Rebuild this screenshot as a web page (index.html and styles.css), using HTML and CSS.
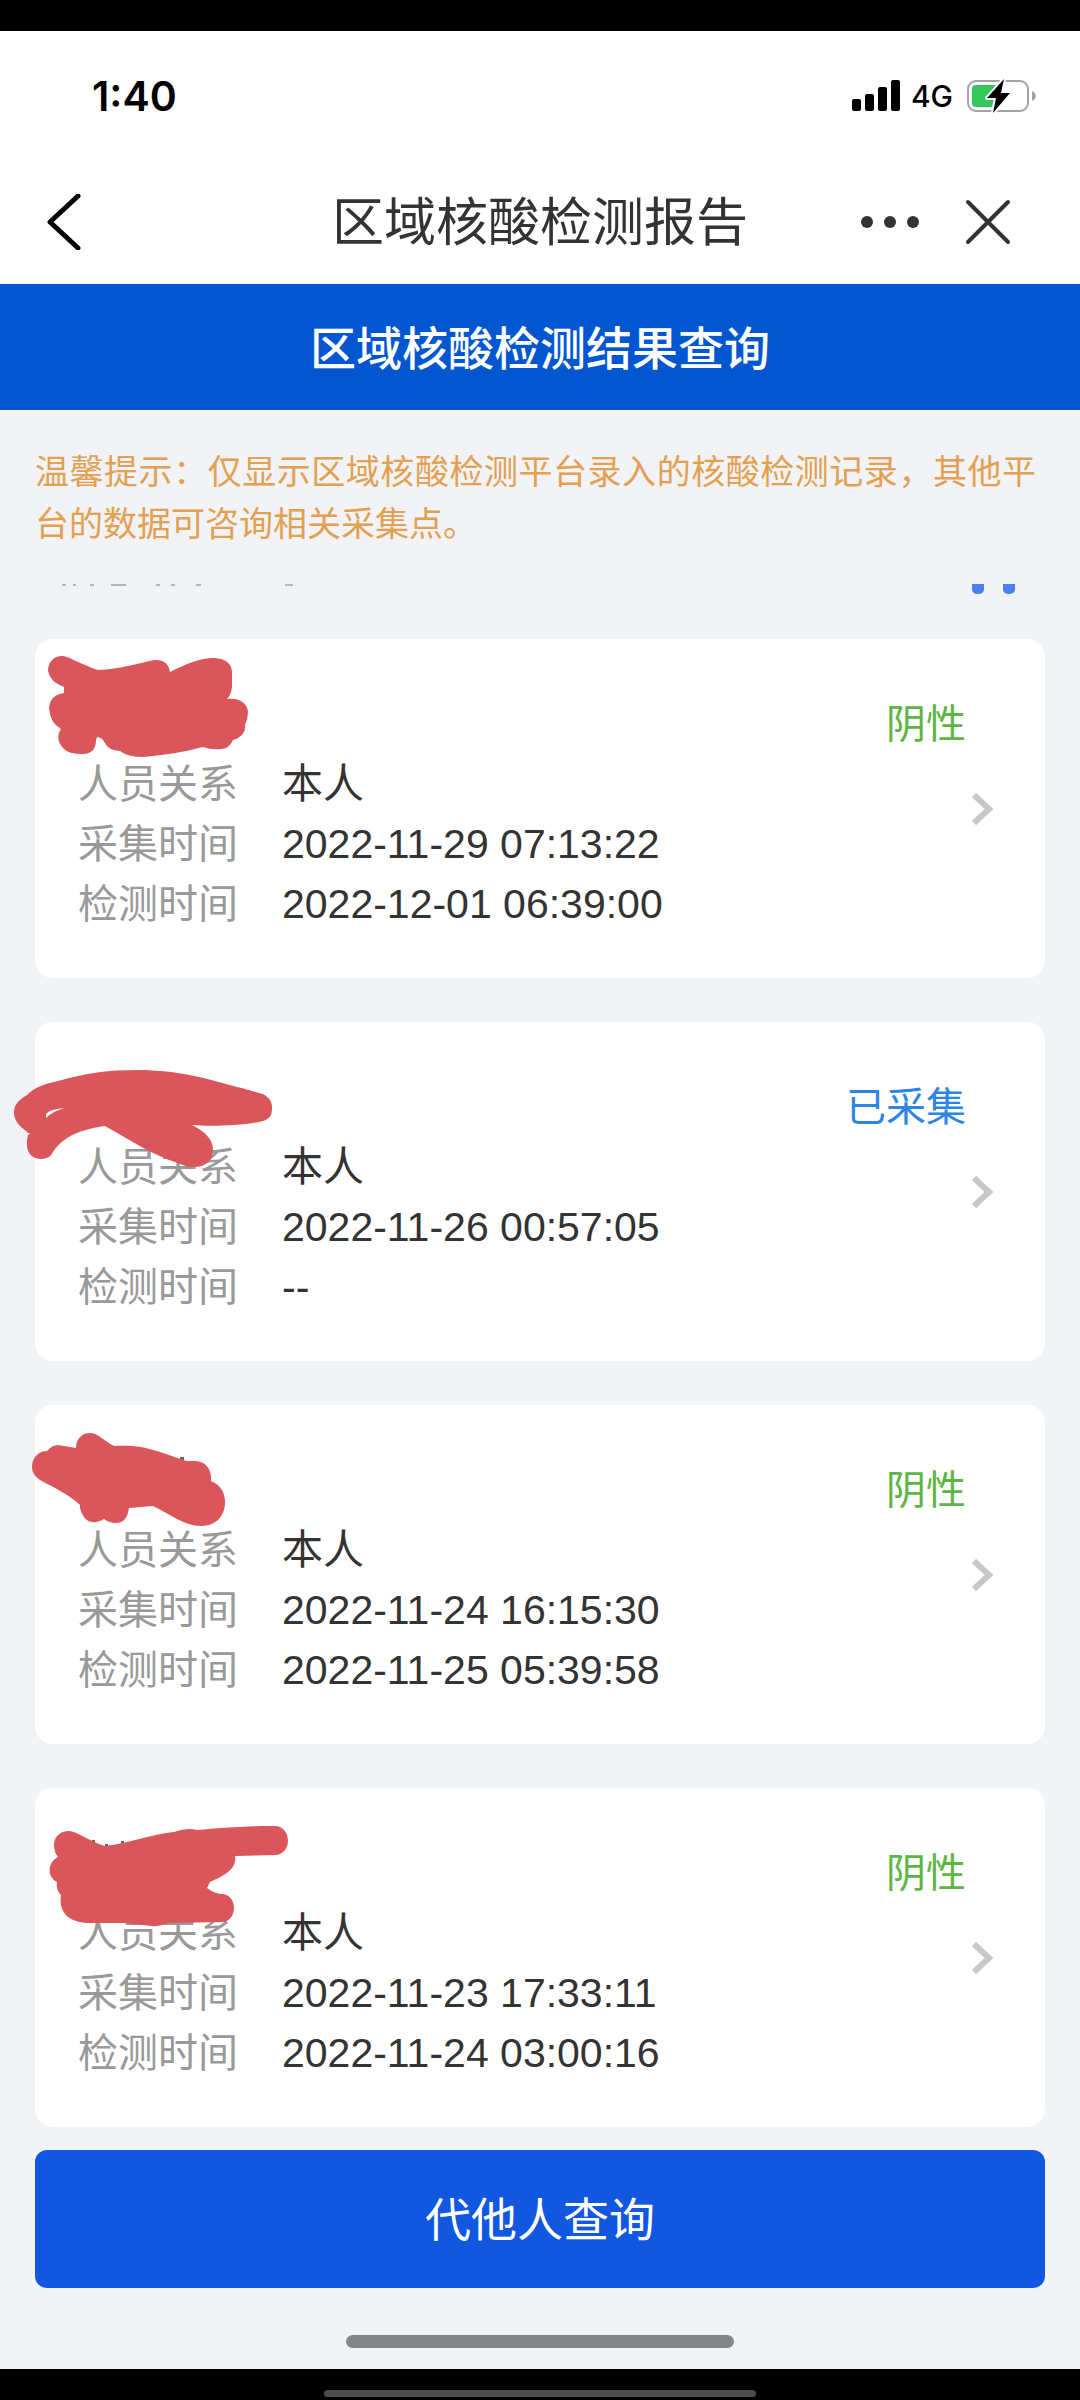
FILE: index.html
```html
<!DOCTYPE html>
<html lang="zh-CN">
<head>
  <meta charset="UTF-8">
  <meta name="viewport" content="width=device-width, initial-scale=1.0">
  <title>区域核酸检测报告</title>
  <link rel="stylesheet" href="styles.css">
</head>
<body>
  <div class="screen">
    <div class="status-bar">
      <span class="clock">1:40</span>
      <div class="status-icons">
        <svg class="signal" width="49" height="32" viewBox="0 0 49 32" aria-hidden="true">
          <rect x="0" y="19" width="9" height="12" rx="2"/>
          <rect x="13" y="14" width="9" height="17" rx="2"/>
          <rect x="26" y="7" width="9" height="24" rx="2"/>
          <rect x="39" y="0" width="9" height="31" rx="2"/>
        </svg>
        <span class="network">4G</span>
        <svg class="battery" width="70" height="34" viewBox="0 0 70 34" aria-hidden="true">
          <rect x="1" y="2" width="60" height="30" rx="8" fill="none" stroke="#a3a3a5" stroke-width="2"/>
          <path d="M65 12c5 2 5 8 0 10z" fill="#a3a3a5"/>
          <rect x="5" y="6" width="27" height="22" rx="4" fill="#34c759"/>
          <path d="M37 0 20 19h9l-3 15L43 14h-9z" fill="#000" stroke="#fff" stroke-width="4" paint-order="stroke" stroke-linejoin="round"/>
        </svg>
      </div>
    </div>

    <header class="nav-bar">
      <button class="nav-btn" aria-label="返回">
        <svg width="34" height="56" viewBox="0 0 34 56"><path d="M31 2 3 28l28 26" fill="none" stroke="#000" stroke-width="5" stroke-linecap="round" stroke-linejoin="round"/></svg>
      </button>
      <h1 class="nav-title">区域核酸检测报告</h1>
      <div class="nav-actions">
        <button class="nav-btn" aria-label="更多">
          <svg width="60" height="14" viewBox="0 0 60 14" fill="#333"><circle cx="7" cy="7" r="6"/><circle cx="30" cy="7" r="6"/><circle cx="53" cy="7" r="6"/></svg>
        </button>
        <button class="nav-btn" aria-label="关闭">
          <svg width="46" height="46" viewBox="0 0 46 46"><path d="M3 3l40 40M43 3 3 43" fill="none" stroke="#333" stroke-width="4" stroke-linecap="round"/></svg>
        </button>
      </div>
    </header>

    <h2 class="banner">区域核酸检测结果查询</h2>

    <p class="tip">温馨提示：仅显示区域核酸检测平台录入的核酸检测记录，其他平台的数据可咨询相关采集点。</p>

    <main class="list">
      <!-- 上一条记录滚动后露出的底边 -->
      <svg class="list-edge" height="10" viewBox="0 0 1080 10" preserveAspectRatio="none" aria-hidden="true">
        <path d="M62 1h4M73 1h3M90 1h4M111 1h15M156 1h4M171 1h4M196 1h5M285 1h8" stroke="#b4b6ba" stroke-width="2"/>
        <path d="M972 0h12v6q-1 4-6 4t-6-4zM1003 0h12v6q-1 4-6 4t-6-4z" fill="#4d7ff0"/>
      </svg>

      <a class="card" href="#">
        <div class="card-body">
          <span class="result negative">阴性</span>
          <dl class="fields">
            <dt>人员关系</dt><dd>本人</dd>
            <dt>采集时间</dt><dd>2022-11-29 07:13:22</dd>
            <dt>检测时间</dt><dd>2022-12-01 06:39:00</dd>
          </dl>
        </div>
        <svg class="arrow" width="24" height="34" viewBox="0 0 24 34"><path d="M3 3l15 14L3 31"/></svg>
        <svg class="mark" width="300" height="150" viewBox="0 0 300 150" aria-hidden="true">
          <path d="M48 32C48 23 54 17 62 17 68 17 78 24 98 31 120 30 140 24 154 21Q168 20 170 33C186 25 200 19 214 19Q232 20 232 34V48Q231 56 227 60C242 58 248 67 248 73Q248 80 245 86 246 97 233 101 229 110 221 110 211 111 203 108 178 115 143 118 128 118 120 112 108 111 105 104 102 98 97 98L96 101Q96 115 82 115 70 115 65 111 54 101 61 90 50 84 49 69 50 56 64 54V48Q50 43 48 32Z"/>
        </svg>
      </a>

      <a class="card" href="#">
        <div class="card-body">
          <span class="result sampled">已采集</span>
          <dl class="fields">
            <dt>人员关系</dt><dd>本人</dd>
            <dt>采集时间</dt><dd>2022-11-26 00:57:05</dd>
            <dt>检测时间</dt><dd>--</dd>
          </dl>
        </div>
        <svg class="arrow" width="24" height="34" viewBox="0 0 24 34"><path d="M3 3l15 14L3 31"/></svg>
        <svg class="mark" width="300" height="150" viewBox="0 0 300 150" aria-hidden="true">
          <path fill-rule="evenodd" d="M14 91C14 82 19 78 27 73 34 66 43 62 58 59 86 51 108 48 138 48 178 48 208 57 237 65 251 68 261 72 263 72 270 76 272 80 272 86 272 93 270 97 263 99 248 103 212 105 192 103 206 110 213 118 213 128 213 139 205 145 194 145 188 145 185 144 178 141 152 133 130 118 105 104 84 107 64 113 53 130Q50 137 41 137C31 137 24 129 28 113L31 111Q28 112 26 109C19 104 14 98 14 91ZM46 96Q53 89 65 86 50 87 46 92Z"/>
        </svg>
      </a>

      <a class="card" href="#">
        <div class="card-body">
          <span class="result negative">阴性</span>
          <dl class="fields">
            <dt>人员关系</dt><dd>本人</dd>
            <dt>采集时间</dt><dd>2022-11-24 16:15:30</dd>
            <dt>检测时间</dt><dd>2022-11-25 05:39:58</dd>
          </dl>
        </div>
        <svg class="arrow" width="24" height="34" viewBox="0 0 24 34"><path d="M3 3l15 14L3 31"/></svg>
        <svg class="mark" width="300" height="150" viewBox="0 0 300 150" aria-hidden="true">
          <path d="M180 52h4v3h-4z" class="mark-dot"/>
          <path d="M32 62C32 53 38 46 47 46Q52 40 58 40L76 43C76 34 82 28 90 28 98 28 104 36 114 41 147 39 160 48 187 56H196C206 57 212 64 211 76 221 80 225 88 225 97 225 111 216 121 201 121 184 121 170 109 153 101L129 103Q127 118 116 118 109 118 104 114 98 118 93 117 84 117 80 103V100C68 89 55 83 40 75Q32 70 32 62Z"/>
        </svg>
      </a>

      <a class="card" href="#">
        <div class="card-body">
          <span class="result negative">阴性</span>
          <dl class="fields">
            <dt>人员关系</dt><dd>本人</dd>
            <dt>采集时间</dt><dd>2022-11-23 17:33:11</dd>
            <dt>检测时间</dt><dd>2022-11-24 03:00:16</dd>
          </dl>
        </div>
        <svg class="arrow" width="24" height="34" viewBox="0 0 24 34"><path d="M3 3l15 14L3 31"/></svg>
        <svg class="mark" width="300" height="150" viewBox="0 0 300 150" aria-hidden="true">
          <path d="M92 52h3v3h-3zM105 56h3v2h-3zM121 53h3v3h-3z" class="mark-dot"/>
          <path d="M54 57C54 49 60 43 69 43 77 43 88 53 105 58 130 55 148 47 174 44Q187 39 197 42C220 40 248 38 275 38 283 38 288 45 288 53 288 61 282 67 275 67L235 68C238 83 218 90 210 94L207 100Q215 106 223 106C231 107 234 114 234 120 234 126 231 131 225 134L167 135Q160 139 152 138L125 135H90C71 135 58 126 61 107 58 104 56 100 57 94 46 88 48 74 58 69Q54 64 54 57Z"/>
        </svg>
      </a>
    </main>

    <button class="query-btn">代他人查询</button>
    <div class="home-bar"></div>
  </div>
  <div class="system-bar"></div>
</body>
</html>
```

FILE: styles.css
```css
* {
  box-sizing: border-box;
}
body {
  margin: 0;
  padding-top: 31px;
  min-height: 100vh;
  display: flex;
  flex-direction: column;
  background: #000;
  color: #333;
  font-family: "Liberation Sans", "Noto Sans CJK SC", sans-serif;
}
h1, h2, p, dl, dd {
  margin: 0;
}
button {
  font-family: inherit;
  border: 0;
}
.screen {
  flex: 1;
  display: flex;
  flex-direction: column;
  background: #f1f3f7;
}

/* 状态栏 */
.status-bar {
  height: 129px;
  padding: 0 43px 0 92px;
  display: flex;
  align-items: center;
  justify-content: space-between;
  background: #fff;
  font-family: Inter, sans-serif;
  color: #000;
}
.clock {
  font-size: 41px;
  font-weight: 600;
}
.status-icons {
  display: flex;
  align-items: center;
}
.network {
  margin: 0 14px 0 10px;
  font-size: 30px;
  font-weight: 500;
}

/* 导航栏 */
.nav-bar {
  height: 124px;
  padding: 0 47px;
  display: grid;
  grid-template-columns: 1fr auto 1fr;
  align-items: center;
  background: #fff;
}
.nav-btn {
  display: flex;
  padding: 0;
  justify-self: start;
  background: none;
}
.nav-title {
  padding-top: 2px;
  font-size: 52px;
  font-weight: 400;
  line-height: 64px;
}
.nav-actions {
  display: flex;
  align-items: center;
  justify-content: flex-end;
  gap: 45px;
  margin-right: 22px;
}

.banner {
  padding-top: 4px;
  background: #0256d0;
  color: #fff;
  font-size: 46px;
  font-weight: 500;
  line-height: 122px;
  text-align: center;
}
.tip {
  padding: 36px 44px 34px 35px;
  color: #e2a050;
  font-size: 34px;
  line-height: 52px;
  text-align: justify;
}

/* 记录列表 */
.list {
  flex: 1;
  display: flex;
  flex-direction: column;
  padding: 0 35px;
}
.list-edge {
  width: calc(100% + 70px);
  margin: 0 -35px 45px;
}
.card {
  position: relative;
  display: flex;
  align-items: center;
  margin-bottom: 44px;
  padding: 0 50px 0 43px;
  border-radius: 18px;
  background: #fff;
  color: inherit;
  font-size: 40px;
  line-height: 60px;
  text-decoration: none;
}
.card:last-child {
  margin-bottom: 23px;
}
.card-body {
  flex: 1;
  padding: 55px 0 44px;
}
.result {
  display: block;
  text-align: right;
}
.negative {
  color: #5eb544;
}
.sampled {
  color: #2b85e4;
}
.fields {
  display: grid;
  grid-template-columns: auto 1fr;
  column-gap: 44px;
}
.fields dt {
  color: #999;
}
.fields dd {
  font-size: 41px;
}
.arrow {
  margin-left: 5px;
  fill: none;
  stroke: #c8c8cc;
  stroke-width: 6;
}
/* 姓名遮挡涂抹 */
.mark {
  position: absolute;
  top: 0;
  left: -35px;
  fill: #db565b;
}
.mark-dot {
  fill: #666;
}

.query-btn {
  margin: 0 35px;
  border-radius: 12px;
  background: #1157e0;
  color: #fff;
  font-size: 46px;
  line-height: 136px;
  padding: 2px 0 0;
}
.home-bar {
  width: 36%;
  height: 13px;
  margin: 47px auto 21px;
  border-radius: 7px;
  background: #848589;
}
.system-bar {
  width: 40%;
  height: 7px;
  margin: 21px auto 3px;
  border-radius: 4px;
  background: #4d4d4d;
}
```
